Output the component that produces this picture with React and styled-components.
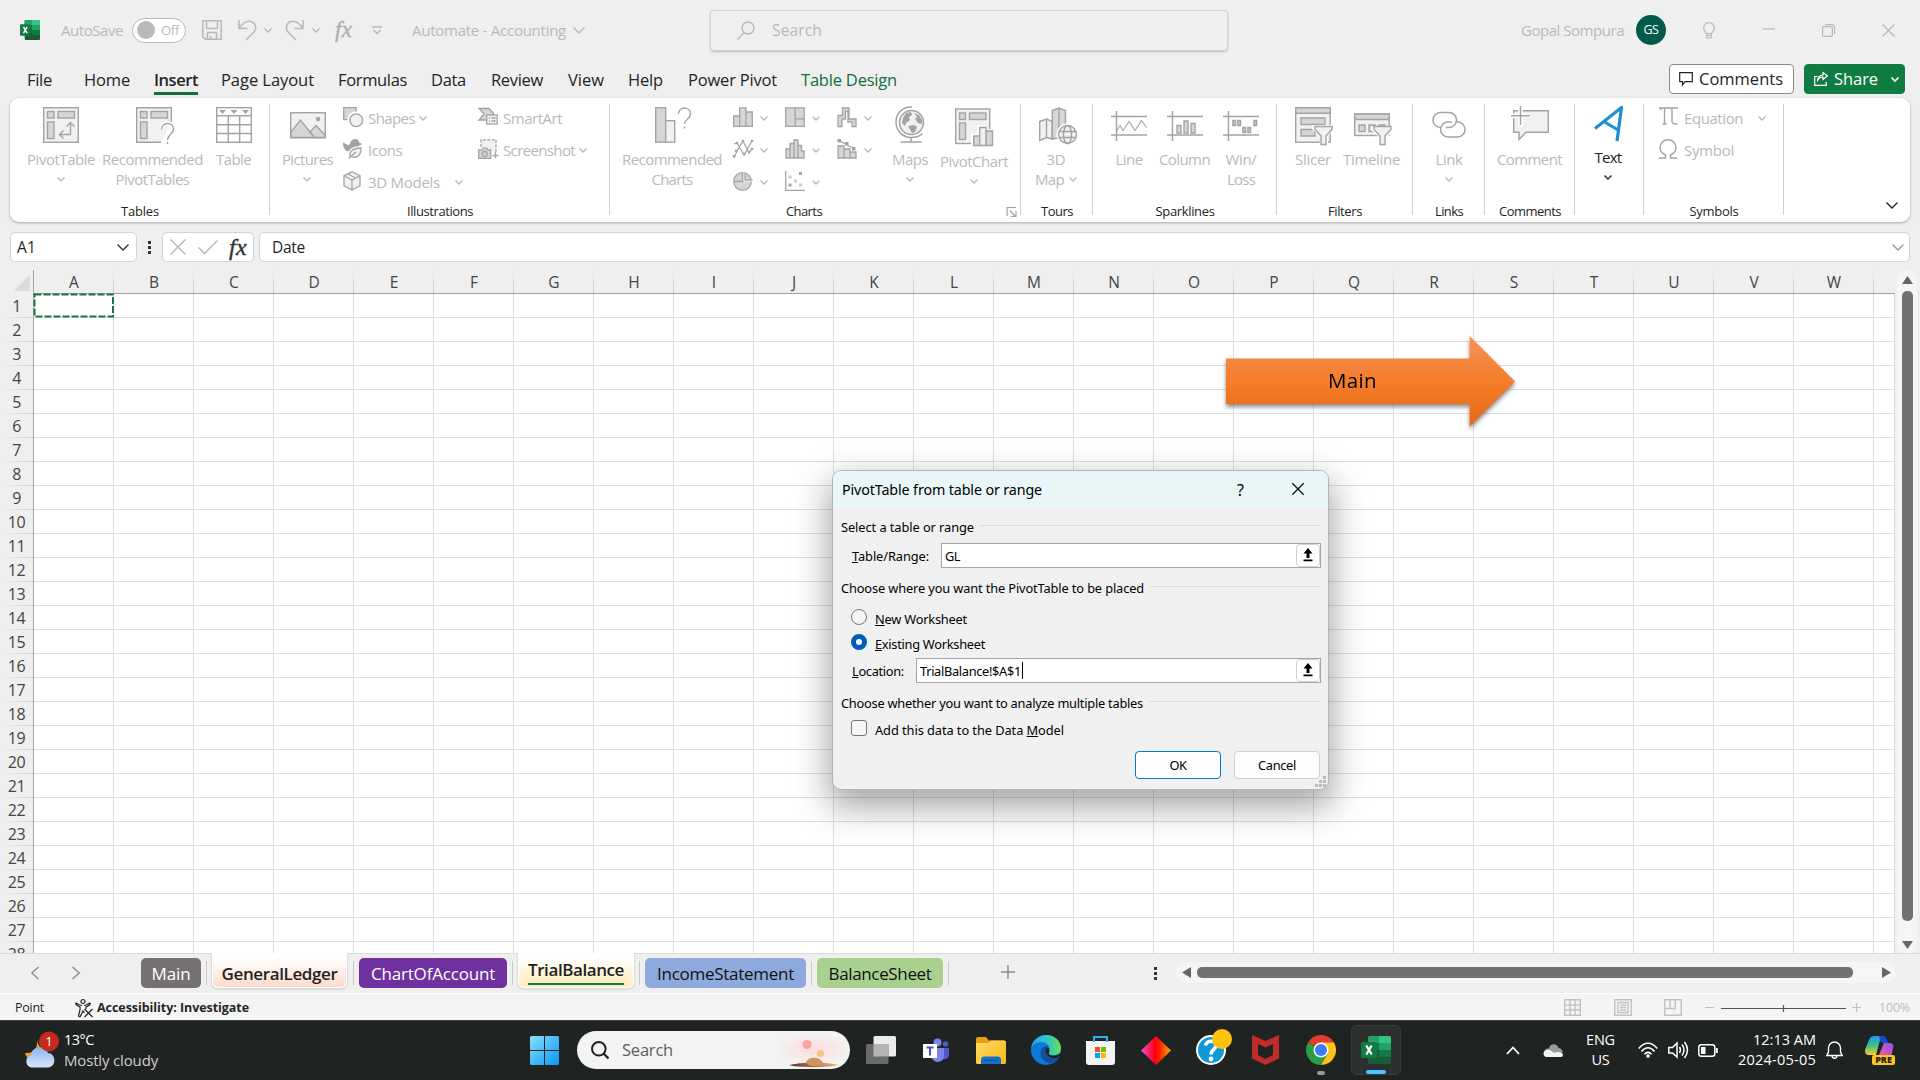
import React, { useLayoutEffect, useRef, useState } from "react";
import styled, { createGlobalStyle, css } from "styled-components";

const GlobalStyle = createGlobalStyle`
  * { box-sizing: border-box; }
  html, body { margin: 0; padding: 0; overflow: hidden; }
  body { font-family: "Open Sans", "Noto Sans", sans-serif; background: #efefef; color: #242424; }
`;

/* ---------- shared ---------- */

const px = (v) => `${v || 0}px`;
const offset = css`
  margin-left: ${(p) => px(p.$ml)};
`;

const LabelBox = styled.span`
  ${offset}
  display: block;
  flex: none;
  width: ${(p) => px(p.$w)};
  font-size: ${(p) => p.$size || 15}px;
  line-height: 20px;
  font-weight: ${(p) => p.$weight || 400};
  color: ${(p) => p.$color || "inherit"};
  white-space: nowrap;
  text-align: left;
`;

/* A one-line label that tracks its letters so that it fills the given width. */
function Label({ w, ml, size, weight, color, children }) {
  const ref = useRef(null);
  const [spacing, setSpacing] = useState(0);
  useLayoutEffect(() => {
    const range = document.createRange();
    range.selectNodeContents(ref.current);
    const natural = range.getBoundingClientRect().width;
    setSpacing((w - natural) / ref.current.textContent.length);
  }, [w]);
  return (
    <LabelBox ref={ref} $w={w} $ml={ml} $size={size} $weight={weight} $color={color} style={{ letterSpacing: spacing }}>
      {children}
    </LabelBox>
  );
}

const Svg = styled.svg`
  ${offset}
  display: block;
  flex: none;
  overflow: visible;
  fill: none;
`;
const Icon = ({ w, h, ml, vb, children, ...rest }) => (
  <Svg width={w} height={h} viewBox={vb || `0 0 ${w} ${h}`} $ml={ml} {...rest}>
    {children}
  </Svg>
);

const LINE = "#a3a3a3";
const MID = "#d6d6d6";
const PALE = "#f1f1f1";
const OFF = "#b9b9b9";

const Chevron = ({ w = 8, ml, color = OFF, sw = 1.4 }) => (
  <Icon w={w} h={w / 2 + 1} ml={ml} stroke={color} strokeWidth={sw}>
    <path d={`M.5 .5 L${w / 2} ${w / 2} L${w - 0.5} .5`} />
  </Icon>
);

const ExcelLogo = ({ w, h }) => (
  <Icon w={w} h={h} vb="0 0 30 28" preserveAspectRatio="none">
    <rect x="7" y="0" width="23" height="28" rx="1.5" fill="#185c37" />
    <path d="M7 1.5Q7 0 8.5 0H18v7H7z" fill="#21a366" />
    <path d="M18 0h10.500q1.500 0 1.500 1.500V7H18z" fill="#33c481" />
    <path d="M7 7h11v7H7z" fill="#107c41" />
    <path d="M18 7h12v7H18z" fill="#21a366" />
    <path d="M18 14h12v7H18z" fill="#107c41" />
    <rect x="0" y="6" width="16" height="16" rx="1.500" fill="#107c41" />
    <path d="M5.300 9.500L10.700 18.500M10.700 9.500L5.300 18.500" stroke="#fff" strokeWidth="2.200" />
  </Icon>
);

/* ---------- title bar ---------- */

const Screen = styled.div`
  width: 1920px;
  height: 1080px;
  display: flex;
  flex-direction: column;
  overflow: hidden;
`;
const TitleBar = styled.header`
  height: 50px;
  padding: 10px 0 0 20px;
  display: flex;
  align-items: center;
  color: ${OFF};
`;
const Toggle = styled.div`
  ${offset}
  width: 54px;
  height: 25px;
  border: 1px solid #b9b9b9;
  border-radius: 13px;
  background: #fff;
  display: flex;
  align-items: center;
  padding-left: 4px;
`;
const Knob = styled.span`
  width: 18px;
  height: 18px;
  border-radius: 50%;
  background: #b9b9b9;
`;
const Fx = styled.span`
  ${offset}
  width: ${(p) => p.$w || 18}px;
  font: italic ${(p) => p.$size || 22}px/24px "Liberation Serif", serif;
  color: ${(p) => p.$color || "#b0b0b0"};
  -webkit-text-stroke: 0.4px;
  letter-spacing: 0.3px;
`;
const SearchBox = styled.div`
  ${offset}
  width: 518px;
  height: 41px;
  border: 1px solid #d2d2d2;
  border-radius: 4px;
  box-shadow: 0 1px 2px rgba(0, 0, 0, 0.22);
  display: flex;
  align-items: center;
  padding-left: 26px;
`;
const Avatar = styled.div`
  ${offset}
  width: 30px;
  height: 30px;
  border-radius: 50%;
  background: #005b4c;
  color: #fff;
  display: flex;
  align-items: center;
  justify-content: center;
`;

const TopBar = () => (
  <TitleBar>
    <ExcelLogo w={20} h={20} />
    <Label ml={21} w={62} size={15}>AutoSave</Label>
    <Toggle $ml={9}>
      <Knob />
      <Label ml={6} w={18} size={13}>Off</Label>
    </Toggle>
    <Icon w={20} h={20} ml={16} stroke={OFF} strokeWidth="1.500">
      <path d="M.8.8h18.400v18.400H3.500L.8 17zM4.500 1v7.500h11V1M5.500 19v-6.500h9V19M8.500 19v-3" />
    </Icon>
    <Icon w={19} h={22} ml={16} stroke={OFF} strokeWidth="1.500">
      <path d="M1 1v8.500h8.500M1.500 9C5 3.500 9 1.500 13 2.500c5 1.500 6 7 3 10.500L8 21" />
    </Icon>
    <Chevron ml={7} />
    <Icon w={19} h={22} ml={13} stroke={OFF} strokeWidth="1.500">
      <path d="M18 1v8.500H9.500M17.500 9C14 3.500 10 1.500 6 2.500c-5 1.500-6 7-3 10.500L11 21" />
    </Icon>
    <Chevron ml={8} />
    <Fx $ml={15} $w={18} $size={23}>fx</Fx>
    <Icon w={10} h={9} ml={19} stroke={OFF} strokeWidth="1.400">
      <path d="M0 1h10M1.500 4L5 7.500 8.500 4" />
    </Icon>
    <Label ml={30} w={154} size={15}>Automate - Accounting</Label>
    <Chevron ml={7} w={12} />
    <SearchBox $ml={125}>
      <Icon w={18} h={19} stroke={OFF} strokeWidth="1.300">
        <circle cx="11" cy="7" r="6" />
        <path d="M7 11.500L.500 18.500" />
      </Icon>
      <Label ml={17} w={50} size={15.500}>Search</Label>
    </SearchBox>
    <Label ml={293} w={103} size={15}>Gopal Sompura</Label>
    <Avatar $ml={12}>
      <Label w={15} size={12.500}>GS</Label>
    </Avatar>
    <Icon w={12} h={17} ml={37} stroke={OFF} strokeWidth="1.200">
      <path d="M3.500 11.500C1 9 .6 7.500.6 6a5.400 5.400 0 0 1 10.800 0c0 1.500-.4 3-2.900 5.500zM3.800 11.500v4.500h4.400v-4.500M4 13.500h4" />
    </Icon>
    <Icon w={12} h={2} ml={48} stroke={OFF} strokeWidth="1.200">
      <path d="M0 0h12" />
    </Icon>
    <Icon w={13} h={13} ml={47} stroke={OFF} strokeWidth="1.200">
      <rect x=".6" y="2.600" width="9.800" height="9.800" rx="1.500" />
      <path d="M3 .6h6.500a3 3 0 0 1 3 3V10" />
    </Icon>
    <Icon w={13} h={13} ml={47} stroke={OFF} strokeWidth="1.200">
      <path d="M.5.5l12 12M12.500.5l-12 12" />
    </Icon>
  </TitleBar>
);

/* ---------- ribbon tabs ---------- */

const TabRow = styled.nav`
  height: 48px;
  padding-left: 27px;
  display: flex;
  align-items: flex-start;
`;
const Tab = styled.div`
  ${offset}
  height: 45px;
  padding-top: 20px;
  border-bottom: 3px solid ${(p) => (p.$active ? "#0f703b" : "transparent")};
`;
const HeadButton = styled.button`
  ${offset}
  margin-top: 14px;
  height: 30px;
  width: ${(p) => px(p.$w)};
  padding: 0 0 0 9px;
  display: flex;
  align-items: center;
  font-family: inherit;
  border-radius: 4px;
  border: 1px solid ${(p) => (p.$green ? "#107c41" : "#8a8a8a")};
  background: ${(p) => (p.$green ? "#107c41" : "#fff")};
  color: ${(p) => (p.$green ? "#fff" : "#242424")};
`;

const tabs = [
  ["File", 25, 0], ["Home", 46, 32], ["Insert", 44, 24], ["Page Layout", 93, 23], ["Formulas", 69, 24],
  ["Data", 35, 24], ["Review", 52, 25], ["View", 36, 25], ["Help", 35, 24], ["Power Pivot", 89, 25], ["Table Design", 96, 24],
];

const Tabs = () => (
  <TabRow>
    {tabs.map(([name, w, ml]) => (
      <Tab key={name} $ml={ml} $active={name === "Insert"}>
        <Label w={w} size={16.500} weight={name === "Insert" ? 600 : 400} color={name === "Table Design" ? "#0f703b" : "#242424"}>{name}</Label>
      </Tab>
    ))}
    <HeadButton $ml={772} $w={125}>
      <Icon w={14} h={14} stroke="#242424" strokeWidth="1.200">
        <path d="M.7.7h12.600v9H6L3.500 13V9.700H.7z" />
      </Icon>
      <Label ml={6} w={84} size={16.500}>Comments</Label>
    </HeadButton>
    <HeadButton $ml={10} $w={101} $green>
      <Icon w={14} h={14} stroke="#fff" strokeWidth="1.200">
        <path d="M3.500 4.500H.7v8.800h11.500V10M3.500 9.500C4 6.500 6 5 9 5v2.500L13.400 3.800 9 .6V3C5.500 3.200 3.500 5.500 3.500 9.500z" />
      </Icon>
      <Label ml={6} w={44} size={16.500}>Share</Label>
      <Chevron ml={13} color="#fff" sw={1.600} />
    </HeadButton>
  </TabRow>
);

/* ---------- ribbon ---------- */

const RibbonPanel = styled.section`
  width: 1900px;
  height: 124px;
  margin-left: 10px;
  flex: none;
  display: flex;
  background: #fff;
  border-radius: 9px;
  box-shadow: 0 1px 3px rgba(0, 0, 0, 0.3);
  position: relative;
`;
const Group = styled.div`
  flex: none;
  width: ${(p) => px(p.$w)};
  height: 124px;
  display: flex;
  flex-direction: column;
  background: linear-gradient(#cfcfcf, #cfcfcf) right 6px / 1px 111px no-repeat;
`;
const GroupBody = styled.div`
  height: 103px;
  display: flex;
  align-items: flex-start;
`;
const GroupFoot = styled.div`
  height: 20px;
  display: flex;
  align-items: center;
`;
const GroupName = styled.div`
  flex: 1;
  display: flex;
  justify-content: center;
`;
const Large = styled.div`
  ${offset}
  flex: none;
  width: ${(p) => px(p.$w)};
  padding-top: ${(p) => 8 - (p.$up || 0)}px;
  display: flex;
  flex-direction: column;
  align-items: center;
  color: ${(p) => (p.$dark ? "#242424" : OFF)};
`;
const LargeIcon = styled.div`
  height: 43px;
  display: flex;
  justify-content: center;
`;
const SecondLine = styled.div`
  height: 20px;
  display: flex;
  align-items: center;
  justify-content: center;
`;
const Column = styled.div`
  ${offset}
  flex: none;
  width: ${(p) => px(p.$w)};
  padding-top: 4px;
  color: ${OFF};
`;
const SmallRow = styled.div`
  height: 32px;
  display: flex;
  align-items: center;
`;
const IconSlot = styled.div`
  width: 20px;
  height: 20px;
  flex: none;
  margin-top: -2px;
`;
const ChartGrid = styled.div`
  ${offset}
  flex: none;
  padding-top: 4px;
  display: grid;
  grid-template-columns: repeat(3, 52px);
  grid-auto-rows: 32px;
  align-items: center;
`;
const ChartCell = styled.div`
  display: flex;
  align-items: center;
`;
const Collapse = styled.div`
  margin-left: 102px;
  padding-top: 104px;
`;

const LargeButton = ({ w, ml, icon, text, tw, second, sw, chevron, dark, up }) => (
  <Large $w={w} $ml={ml} $dark={dark} $up={up}>
    <LargeIcon>{icon}</LargeIcon>
    <Label w={tw || w} size={15}>{text}</Label>
    <SecondLine>
      {second && <Label w={sw} size={15}>{second}</Label>}
      {chevron && <Chevron ml={second ? 5 : -1} color={dark ? "#242424" : OFF} />}
    </SecondLine>
  </Large>
);

const Small = ({ icon, text, w, chevron, gap = 5 }) => (
  <SmallRow>
    <IconSlot>{icon}</IconSlot>
    <Label ml={5} w={w} size={15}>{text}</Label>
    {chevron && <Chevron ml={gap} />}
  </SmallRow>
);

const RibbonGroup = ({ w, name, nameW, launcher, children }) => (
  <Group $w={w}>
    <GroupBody>{children}</GroupBody>
    <GroupFoot>
      <GroupName>{name && <Label w={nameW} size={13} color="#242424">{name}</Label>}</GroupName>
      {launcher && (
        <Svg width="11" height="11" $ml={8} stroke={LINE} strokeWidth="1.200" viewBox="-0.500 -5 11 11">
          <path d="M.6 5V-3.500H9.500M3.500-.5L8.500 5M9.500 0v5.500H4" />
        </Svg>
      )}
      {launcher && <Spacer />}
    </GroupFoot>
  </Group>
);
const Spacer = styled.span`
  width: 4px;
`;

const Funnel = ({ x, y }) => (
  <path transform={`translate(${x} ${y})`} d="M0 0h17v3l-6 6.500V18H6V9.500L0 3z" fill={PALE} stroke={LINE} strokeWidth="1.400" />
);

const PivotIcon = () => (
  <Icon w={36} h={38} stroke={LINE} strokeWidth="1.400">
    <rect x=".7" y="1.700" width="34.600" height="34.600" fill={PALE} />
    <rect x="4.500" y="5.500" width="6.500" height="6.500" fill={MID} />
    <rect x="15" y="5.500" width="16.500" height="6.500" fill={MID} />
    <rect x="4.500" y="16" width="6.500" height="16.500" fill={MID} />
    <path d="M17 28.500h10.500V17M20.500 24.500l-4 4 4 4M23.500 20.500l4-4 4 4" />
  </Icon>
);
const RecPivotIcon = () => (
  <Icon w={34} h={38} stroke={LINE} strokeWidth="1.400">
    <path d="M25 36.300H.7V1.700h34.600V16" fill={PALE} />
    <rect x="4.500" y="5.500" width="6.500" height="6.500" fill={MID} />
    <rect x="15" y="5.500" width="16.500" height="6.500" fill={MID} />
    <rect x="4.500" y="16" width="6.500" height="16.500" fill={MID} />
    <path d="M25.500 23.500c0-8 12-8 12-.5 0 5-6 5.500-6 11" stroke="#fff" strokeWidth="5" />
    <path d="M25.500 23.500c0-8 12-8 12-.5 0 5-6 5.500-6 11M31.500 36v2" />
  </Icon>
);
const TableIcon = () => (
  <Icon w={36} h={38} stroke={LINE} strokeWidth="1.400">
    <rect x=".7" y="1.700" width="34.600" height="34.600" fill="#fff" />
    <path d="M1 9.700h34M1 18.700h34M1 27.500h34M12.300 10v26M23.700 10v26" />
    <path d="M3 4h7l-3.500 4zM14.500 4h7L18 8zM26 4h7l-3.500 4z" fill={LINE} stroke="none" />
  </Icon>
);
const PictureIcon = () => (
  <Icon w={36} h={38} stroke={LINE} strokeWidth="1.400">
    <rect x=".7" y="6.700" width="34.600" height="25" fill={PALE} />
    <path d="M1 26l9.500-12 14 17.500H1z" fill={MID} />
    <path d="M20 26l6-6.500 9 9.500v2.500H24.500z" fill={MID} />
    <circle cx="28" cy="13" r="2.200" fill={LINE} stroke="none" />
  </Icon>
);
const ShapesIcon = () => (
  <Icon w={20} h={20} stroke={LINE} strokeWidth="1.300">
    <path d="M.7.7h12.500v12H.7z" fill={MID} />
    <circle cx="12.800" cy="13" r="8.500" fill="#fff" stroke="none" />
    <circle cx="13.200" cy="13.200" r="6.400" fill={PALE} />
  </Icon>
);
const BirdIcon = () => (
  <Icon w={20} h={20} stroke={LINE} strokeWidth="1.300">
    <path d="M.7 4.500l5 2.500C8 6.500 7.500.7 12 .7c3 0 3.500 2 3.500 3.300l2.500 1-2.500 1.200c0 3-2 4.800-5 5.300H4C1.500 10 .7 7 .7 4.500z" fill={LINE} />
    <path d="M6 19c0-7 4-10 12-10 0 7-2 10-6 10-2.500 0-4-1-4-3" fill="#fff" stroke="#fff" strokeWidth="4" />
    <path d="M5.500 19.500L13 13M7 17.500c-1-6 4-8.500 11-8.500 0 7-3 11-11 8.500z" fill={PALE} />
  </Icon>
);
const CubeIcon = () => (
  <Icon w={18} h={20} stroke={LINE} strokeWidth="1.300">
    <path d="M9 .8l8 3.900v9.900L9 19l-8-4.400V4.700z" fill={PALE} />
    <path d="M1.500 5L9 9l7.500-4M9 9v9.500M5 3l7.500 4" />
  </Icon>
);
const SmartArtIcon = () => (
  <Icon w={20} h={18} stroke={LINE} strokeWidth="1.300">
    <path d="M1 1.500h10l5 5.500-2.500 2H9v4H1l5-6z" fill={MID} />
    <rect x="8.700" y="8" width="10.500" height="9" fill={PALE} />
    <path d="M11 11h1M13.500 11h4M11 14h1M13.500 14h4" />
  </Icon>
);
const ScreenshotIcon = () => (
  <Icon w={20} h={20} stroke={LINE} strokeWidth="1.300">
    <path d="M3 8V.8h15V14" strokeDasharray="3 1.500" fill={PALE} />
    <path d="M17.500 13v6M14.500 16.500h6" />
    <path d="M.7 11h3l1-1.800h4l1 1.800h3v8.300H.7z" fill={MID} />
    <circle cx="6.700" cy="15" r="2.500" />
  </Icon>
);
const RecChartIcon = () => (
  <Icon w={34} h={38} stroke={LINE} strokeWidth="1.400">
    <rect x=".7" y="1.700" width="10" height="34.500" fill={MID} />
    <rect x="10.700" y="14.700" width="9" height="21.500" fill={PALE} />
    <path d="M23.500 8c0-8 12-8 12 0 0 5-6 5.500-6 10M29.500 20.500v2" />
  </Icon>
);
const GlobeIcon = () => (
  <Icon w={30} h={38} stroke={LINE} strokeWidth="1.500">
    <circle cx="16.500" cy="16.500" r="12" fill={PALE} />
    <path d="M17 1C7 .5 1 8 1 16c0 9 7 15.500 15 15.500 5 0 9-1.500 11.500-4M16 31.500v4M5.500 36h21" />
    <path d="M8 12l3-5 5-1 1 3-3 2 1 3-4 3-1 3-3-3zM19 7l5 2 3 5v4l-4-1-3-4 2-2zM13 20l6-1 3 2-2 5-3 1z" fill={LINE} stroke="none" />
  </Icon>
);
const PivotChartIcon = () => (
  <Icon w={38} h={38} stroke={LINE} strokeWidth="1.400">
    <rect x=".7" y="1" width="34" height="34.500" fill={PALE} />
    <rect x="4.500" y="5" width="6" height="6.500" fill={MID} />
    <rect x="14.500" y="5" width="16.500" height="6.500" fill={MID} />
    <rect x="4.500" y="15" width="6" height="16.500" fill={MID} />
    <path d="M16 39V26h6v-9h9v4h8v18z" fill="#fff" stroke="none" />
    <path d="M18.700 28h6v9.500h-6zM31 23h6.500v14.500H31z" fill={MID} />
    <path d="M24.700 19.500h6.300v18h-6.300z" fill={PALE} />
  </Icon>
);
const Map3DIcon = () => (
  <Icon w={34} h={38} stroke={LINE} strokeWidth="1.400">
    <path d="M.7 15.500l7-2.500 5.500 2.500V33l-5.500-1.500-7 3z" fill={PALE} />
    <path d="M13.300 4.500L20 2l6.500 2.500V34L20 32l-6.700 1z" fill={MID} />
    <path d="M7.500 13v18.500M20 2v30" />
    <circle cx="28.500" cy="28.500" r="11" fill="#fff" stroke="none" />
    <circle cx="28.500" cy="28.500" r="9" fill={PALE} />
    <ellipse cx="28.500" cy="28.500" rx="4" ry="9" />
    <path d="M20 25.500h17M20 31.500h17" />
  </Icon>
);
const Spark = ({ children }) => (
  <Icon w={36} h={38} stroke={LINE} strokeWidth="1.400">
    <path d="M0 10.500h36M0 29h36M5.500 5v30" />
    {children}
  </Icon>
);
const SparkLine = () => (
  <Spark><path d="M6 24.500l3-5 3 5 6-9 6 9 6.500-10 5 7" strokeWidth="1.100" /></Spark>
);
const SparkColumn = () => (
  <Spark><path d="M10 19.500h4V27h-4zM17 15h4v12h-4zM24 17.500h4V27h-4z" fill={MID} /></Spark>
);
const SparkWin = () => (
  <Spark><path d="M10 14.500h2.500v5H10zM15 14.500h2.500v5H15zM20 21.500h2.500v5H20zM25 21.500h2.500v5H25zM31 14.500h2.500v5H31z" fill={MID} strokeWidth="1.600" /></Spark>
);
const SlicerIcon = () => (
  <Icon w={36} h={38} stroke={LINE} strokeWidth="1.400">
    <rect x=".7" y="1.700" width="34.500" height="34.500" fill={PALE} />
    <path d="M.7 1.700h34.500v5.500H.7z" fill={MID} />
    <path d="M6 12h24v6.500H6zM6 23.500h14v6.500H6z" fill={MID} />
    <path d="M17 19h22v5l-6 6v10h-8V30l-8-7z" fill="#fff" stroke="none" />
    <Funnel x={20} y={20.500} />
  </Icon>
);
const TimelineIcon = () => (
  <Icon w={36} h={38} stroke={LINE} strokeWidth="1.400">
    <rect x=".7" y="8" width="34.500" height="21.500" fill={PALE} />
    <path d="M.7 8h34.500v5.500H.7z" fill={MID} />
    <path d="M5 19h6v6.500H5zM15 19h6v6.500h-6zM25 19h6v6.500h-6z" fill={MID} />
    <path d="M17 20.500h22v5l-6 6v10h-8V31l-8-7z" fill="#fff" stroke="none" />
    <Funnel x={20} y={20.500} />
  </Icon>
);
const LinkIcon = () => (
  <Icon w={36} h={38} stroke={LINE} strokeWidth="1.500">
    <path d="M10 21.500H9.500a7.500 7.500 0 0 1 0-15h8.500a7.500 7.500 0 0 1 0 15h-3M26 16h.5a7.500 7.500 0 0 1 0 15H17a7.500 7.500 0 0 1 0-15h4" />
  </Icon>
);
const CommentIcon = () => (
  <Icon w={38} h={38} stroke={LINE} strokeWidth="1.400">
    <path d="M2.700 4.700h34.600v21.500H15L8 33.500v-7.300H2.700z" fill={PALE} />
    <path d="M9.500-1v22M0 9.700h19" stroke="#fff" strokeWidth="4.500" />
    <path d="M9.500 0v19M0 9.700h19" />
  </Icon>
);
const TextIcon = () => (
  <Icon w={28} h={40} stroke="#1e8fd5" strokeWidth="3.200" strokeLinejoin="round">
    <path d="M1 24.500L27.500 3.500 23 37M9 17l15 9" />
  </Icon>
);
const PiIcon = () => (
  <Icon w={19} h={18} stroke={LINE} strokeWidth="1.400">
    <path d="M0 1h19M2 0v3M5.500 1v16M3.500 17h4M13 1v13q0 3 3.500 3h2" />
  </Icon>
);
const OmegaIcon = () => (
  <Icon w={18} h={20} stroke={LINE} strokeWidth="1.400">
    <path d="M0 19h6.500v-3C3 14.500 1 11.500 1 8.500a8 7.800 0 0 1 16 0c0 3-2 6-5.500 7.500v3H18" />
  </Icon>
);

const chartIcons = [
  <path key="bar" d="M.7 9h6v10.300h-6zM6.700.8H13v18.500H6.700zM13 5h6.300v14.300H13z" fill={MID} />,
  <path key="tree" d="M.7.8h9.500v18.500H.7zM10.200.8h9v11h-9zM10.200 11.800h9v7.500h-9z" fill={MID} />,
  <path key="fall" d="M1 19.500V8.500h4.500V1H12v11h7v7.500h-4V15h-4V4.500H8.500V12H5v7.500z" fill={MID} />,
  <g key="line">
    <path d="M1 19L4 12 10 2l6 12 3-4M1 5l3-1 7 12L19 2" strokeWidth="1.200" />
    <path d="M4 4h.1M10 2h.1M19 2h.1M1 17h.1M11 15h.1M16 13h.1M3 12h.1M19 10h.1" strokeLinecap="round" strokeWidth="2.600" />
  </g>,
  <path key="hist" d="M1 10h4V4.500h4V1h4v5.500h3.500v5.500H19v7H1zM5 10v9M9 5v14M13 7v12" fill={MID} />,
  <g key="combo">
    <path d="M1 7h6v12H1zM7 10h6v9H7zM13 13h6v6h-6z" fill={MID} />
    <path d="M2 1.500l7 4 8 4" />
    <path d="M.500 0h3.500v3.500H.500zM8 3h3.500v3.500H8zM15 8h3.500v3.500H15z" fill={LINE} stroke="none" />
  </g>,
  <g key="pie"><circle cx="9.500" cy="10.500" r="8.800" fill={MID} /><path d="M11.500-.5v10h8.500" stroke="#fff" strokeWidth="2" /><path d="M9.500 1.700v8.800h-8M12 1v8h7.500" /></g>,
  <g key="scatter">
    <path d="M.7 0v19.300H20" />
    <path d="M3.500 14h3M14 2.500h3" strokeWidth="3" />
    <path d="M3.500 6h3M9 10h3M14 14h3" stroke="#cccccc" strokeWidth="3" />
  </g>,
];

const Ribbon = () => (
  <RibbonPanel>
    <RibbonGroup w={260} name="Tables" nameW={38}>
      <LargeButton ml={17} w={68} icon={<PivotIcon />} text="PivotTable" chevron />
      <LargeButton ml={7} w={101} icon={<RecPivotIcon />} text="Recommended" second="PivotTables" sw={74} />
      <LargeButton ml={13} w={35} icon={<TableIcon />} text="Table" />
    </RibbonGroup>
    <RibbonGroup w={340} name="Illustrations" nameW={66}>
      <LargeButton ml={12} w={51} icon={<PictureIcon />} text="Pictures" chevron />
      <Column $ml={10} $w={135}>
        <Small icon={<ShapesIcon />} text="Shapes" w={47} chevron gap={4} />
        <Small icon={<BirdIcon />} text="Icons" w={34} />
        <Small icon={<CubeIcon />} text="3D Models" w={72} chevron gap={15} />
      </Column>
      <Column $w={120}>
        <Small icon={<SmartArtIcon />} text="SmartArt" w={59} />
        <Small icon={<ScreenshotIcon />} text="Screenshot" w={72} chevron gap={4} />
      </Column>
    </RibbonGroup>
    <RibbonGroup w={411} name="Charts" nameW={36} launcher>
      <LargeButton ml={12} w={100} icon={<RecChartIcon />} text="Recommended" second="Charts" sw={41} />
      <ChartGrid $ml={11}>
        {chartIcons.map((icon, i) => (
          <ChartCell key={i}>
            <IconSlot><Icon w={20} h={20} stroke={LINE} strokeWidth="1.300">{icon}</Icon></IconSlot>
            <Chevron ml={7} />
          </ChartCell>
        ))}
      </ChartGrid>
      <LargeButton ml={3} w={36} icon={<GlobeIcon />} text="Maps" chevron />
      <LargeButton ml={12} w={68} up={-2} icon={<PivotChartIcon />} text="PivotChart" chevron />
    </RibbonGroup>
    <RibbonGroup w={72} name="Tours" nameW={32}>
      <LargeButton ml={14} w={42} icon={<Map3DIcon />} text="3D" tw={19} second="Map" sw={29} chevron />
    </RibbonGroup>
    <RibbonGroup w={184} name="Sparklines" nameW={59}>
      <LargeButton ml={18} w={36} icon={<SparkLine />} text="Line" tw={27} />
      <LargeButton ml={12} w={51} icon={<SparkColumn />} text="Column" />
      <LargeButton ml={13} w={36} icon={<SparkWin />} text="Win/" tw={31} second="Loss" sw={28} />
    </RibbonGroup>
    <RibbonGroup w={136} name="Filters" nameW={34}>
      <LargeButton ml={18} w={36} icon={<SlicerIcon />} text="Slicer" />
      <LargeButton ml={12} w={57} icon={<TimelineIcon />} text="Timeline" />
    </RibbonGroup>
    <RibbonGroup w={72} name="Links" nameW={28}>
      <LargeButton ml={18} w={36} icon={<LinkIcon />} text="Link" tw={27} chevron />
    </RibbonGroup>
    <RibbonGroup w={90} name="Comments" nameW={62}>
      <LargeButton ml={12} w={65} icon={<CommentIcon />} text="Comment" />
    </RibbonGroup>
    <RibbonGroup w={69}>
      <LargeButton ml={15} w={36} up={2} icon={<TextIcon />} text="Text" tw={27} chevron dark />
    </RibbonGroup>
    <RibbonGroup w={140} name="Symbols" nameW={49}>
      <Column $ml={15} $w={110}>
        <Small icon={<PiIcon />} text="Equation" w={59} chevron gap={15} />
        <Small icon={<OmegaIcon />} text="Symbol" w={50} />
      </Column>
    </RibbonGroup>
    <Collapse>
      <Chevron w={12} color="#242424" />
    </Collapse>
  </RibbonPanel>
);

/* ---------- formula bar ---------- */

const FormulaRow = styled.div`
  height: 48px;
  flex: none;
  padding: 10px 0 0 10px;
  display: flex;
`;
const Field = styled.div`
  ${offset}
  width: ${(p) => px(p.$w)};
  height: 30px;
  padding: 0 ${(p) => p.$pr || 6}px 0 ${(p) => p.$pl || 6}px;
  border: 1px solid #d4d4d4;
  border-radius: 5px;
  background: #fff;
  display: flex;
  align-items: center;
  justify-content: space-between;
`;
const Dots = () => (
  <Icon w={4} h={30} ml={11}><path d="M0 9h3v3H0zM0 14h3v3H0zM0 19h3v3H0z" fill="#333" /></Icon>
);

const FormulaBar = () => (
  <FormulaRow>
    <Field $w={127} $pr={7}>
      <Label w={19} size={15.500}>A1</Label>
      <Chevron w={12} color="#333" />
    </Field>
    <Dots />
    <Field $ml={10} $w={92} $pl={7} $pr={5}>
      <Icon w={16} h={16} stroke="#b5b5b5" strokeWidth="1.400"><path d="M.5.5l15 15M15.500.5l-15 15" /></Icon>
      <Icon w={20} h={14} stroke="#b5b5b5" strokeWidth="1.400"><path d="M.5 7.500l6 6L19.500.5" /></Icon>
      <Fx $w={19} $size={24} $color="#333">fx</Fx>
    </Field>
    <Field $ml={5} $w={1651} $pl={12} $pr={5}>
      <Label w={33} size={15.500}>Date</Label>
      <Chevron w={12} color="#9a9a9a" />
    </Field>
  </FormulaRow>
);

/* ---------- worksheet ---------- */

const Sheet = styled.main`
  height: 683px;
  flex: none;
  display: flex;
  position: relative;
`;
const RowHeads = styled.div`
  width: 34px;
  border-right: 1px solid #a6a6a6;
  overflow: hidden;
`;
const Corner = styled.div`
  height: 24px;
  padding: 5px 0 0 14px;
  border-bottom: 1px solid #efefef;
  border-right: 1px solid #efefef;
  margin-right: -1px;
`;
const RowHead = styled.div`
  height: 24px;
  background: linear-gradient(to right, transparent, #d0d0d0) bottom / 100% 1px no-repeat;
  text-align: center;
  font-size: 16px;
  letter-spacing: -0.400px;
  line-height: 25px;
  color: #444;
`;
const CellsPane = styled.div`
  width: 1861px;
  display: flex;
  flex-direction: column;
`;
const ColHeads = styled.div`
  height: 24px;
  flex: none;
  border-bottom: 1px solid #a0a0a0;
  display: flex;
  overflow: hidden;
`;
const ColHead = styled.div`
  flex: none;
  width: 80px;
  height: 23px;
  background: linear-gradient(transparent, #c8c8c8) right / 1px 100% no-repeat;
  text-align: center;
  font-size: 15.500px;
  line-height: 24px;
  color: #444;
`;
const Cells = styled.div`
  flex: 1;
  border-right: 1px solid #dcdcdc;
  background:
    repeating-linear-gradient(to right, transparent 0 79px, #dedede 79px 80px),
    repeating-linear-gradient(to bottom, #fff 0 23px, #dedede 23px 24px);
`;
const Marching = styled.svg`
  position: absolute;
  left: 33px;
  top: 23px;
`;
const ArrowShape = styled.div`
  position: absolute;
  left: 1226px;
  top: 66px;
  width: 289px;
  height: 92px;
  filter: drop-shadow(0 3px 2px rgba(0, 0, 0, 0.450));
`;
const ArrowFill = styled.div`
  height: 92px;
  padding: 34px 0 0 102px;
  clip-path: polygon(0 24.500%, 84.300% 24.500%, 84.300% 0, 100% 49.500%, 84.300% 98.500%, 84.300% 74%, 0 74%);
  background: linear-gradient(#f6925a, #f57c2a 50%, #e66914);
  color: #000;
`;
const VScroll = styled.div`
  margin-left: 2px;
  width: 20px;
  height: 685px;
  border-radius: 10px;
  background: #f5f5f5;
  display: flex;
  flex-direction: column;
  align-items: center;
  padding-top: 6px;
`;
const VThumb = styled.div`
  width: 11px;
  height: 630px;
  margin: 7px 0 20px;
  border-radius: 5px;
  background: #717171;
`;

const columns = "ABCDEFGHIJKLMNOPQRSTUVW".split("");
const rows = Array.from({ length: 28 }, (_, i) => i + 1);

/* ---------- dialog ---------- */

const Dialog = styled.div`
  position: absolute;
  left: 832px;
  top: 200px;
  width: 497px;
  height: 320px;
  border: 1px solid #b4b4b4;
  border-radius: 9px;
  background: #f0f0f0;
  box-shadow: 0 14px 34px 4px rgba(0, 0, 0, 0.340);
  overflow: hidden;
  color: #000;
  font-family: "Noto Sans", sans-serif;
`;
const DialogTitle = styled.div`
  height: 37px;
  background: #e8f6f8;
  padding-left: 9px;
  display: flex;
  align-items: center;
`;
const DialogBody = styled.div`
  padding: 8px 7px 0 8px;
  position: relative;
`;
const Section = styled.div`
  height: 22px;
  margin-top: ${(p) => px(p.$mt)};
  display: flex;
  align-items: center;
  &::after {
    content: "";
    flex: 1;
    margin-left: 6px;
    height: 1px;
    margin-top: -3px;
    background: #dcdcdc;
  }
`;
const FormRow = styled.div`
  height: 25px;
  padding-left: 11px;
  margin-top: ${(p) => px(p.$mt)};
  display: flex;
  align-items: center;
`;
const Choice = styled.div`
  height: 25px;
  padding-left: 10px;
  margin-top: ${(p) => px(p.$mt)};
  display: flex;
  align-items: center;
`;
const TextInput = styled.div`
  ${offset}
  flex: 1;
  height: 25px;
  border: 1px solid #a5a5a9;
  background: #fff;
  padding-left: 3px;
  display: flex;
  align-items: center;
`;
const Caret = styled.span`
  width: 1px;
  height: 17px;
  margin-left: 1px;
  background: #000;
`;
const Picker = styled.span`
  width: 24px;
  height: 23px;
  margin-left: auto;
  border: 1px solid #d0d0d0;
  border-radius: 4px;
  display: flex;
  align-items: center;
  justify-content: center;
`;
const Radio = styled.span`
  width: 16px;
  height: 16px;
  margin-top: -3px;
  border-radius: 50%;
  border: ${(p) => (p.$on ? "5px solid #005fb8" : "1px solid #767676")};
  background: ${(p) => (p.$on ? "#fff" : "#f4f4f4")};
`;
const Check = styled.span`
  width: 16px;
  height: 16px;
  margin-top: -3px;
  border-radius: 3px;
  border: 1px solid #767676;
  background: #f5f5f5;
`;
const Buttons = styled.div`
  display: flex;
  justify-content: flex-end;
  gap: 13px;
  margin-top: 9px;
  padding-right: 1px;
`;
const Button = styled.button`
  width: 86px;
  height: 28px;
  padding: 0;
  border-radius: 4px;
  border: 1px solid ${(p) => (p.$primary ? "#0078d4" : "#d0d0d0")};
  background: #fdfdfd;
  display: flex;
  align-items: center;
  justify-content: center;
  font-family: inherit;
  color: #000;
`;
const Grip = styled.svg`
  position: absolute;
  right: 2px;
  bottom: 2px;
`;

const PickerButton = () => (
  <Picker>
    <Icon w={10} h={16}><path d="M5 0l4.500 5.500H6.500V10h-3V5.500H.5zM.5 11.500h9v1.800h-9z" fill="#000" /></Icon>
  </Picker>
);

const PivotDialog = () => (
  <Dialog>
    <DialogTitle>
      <Label w={200} size={14.300}>PivotTable from table or range</Label>
      <Label ml={195} w={8} size={16}>?</Label>
      <Icon w={12} h={14} ml={47} stroke="#111" strokeWidth="1.300"><path d="M.3.3l11.400 11.400M11.700.3L.3 11.700" /></Icon>
    </DialogTitle>
    <DialogBody>
      <Section><Label w={133} size={12.800}>Select a table or range</Label></Section>
      <FormRow $mt={5}>
        <Label w={77} size={12.800}><u>T</u>able/Range:</Label>
        <TextInput $ml={12}><Label w={15} size={12.800}>GL</Label><PickerButton /></TextInput>
      </FormRow>
      <Section $mt={9}><Label w={303} size={12.800}>Choose where you want the PivotTable to be placed</Label></Section>
      <Choice $mt={7}><Radio /><Label ml={8} w={92} size={12.800}><u>N</u>ew Worksheet</Label></Choice>
      <Choice><Radio $on /><Label ml={8} w={110} size={12.800}><u>E</u>xisting Worksheet</Label></Choice>
      <FormRow $mt={2}>
        <Label w={52} size={12.800}><u>L</u>ocation:</Label>
        <TextInput $ml={12}><Label w={101} size={12.800}>TrialBalance!$A$1</Label><Caret /><PickerButton /></TextInput>
      </FormRow>
      <Section $mt={9}><Label w={302} size={12.800}>Choose whether you want to analyze multiple tables</Label></Section>
      <Choice $mt={3}><Check /><Label ml={8} w={189} size={12.800}>Add this data to the Data <u>M</u>odel</Label></Choice>
      <Buttons>
        <Button $primary><Label w={17} size={12.800}>OK</Label></Button>
        <Button><Label w={38} size={12.800}>Cancel</Label></Button>
      </Buttons>
    </DialogBody>
    <Grip width="11" height="11" fill="#bdbdbd">
      <path d="M8 0h3v3H8zM4 4h3v3H4zM8 4h3v3H8zM0 8h3v3H0zM4 8h3v3H4zM8 8h3v3H8z" />
    </Grip>
  </Dialog>
);

const Worksheet = () => (
  <Sheet>
    <RowHeads>
      <Corner><Icon w={16} h={16}><path d="M16 0v16H0z" fill="#dadada" /></Icon></Corner>
      {rows.map((r) => <RowHead key={r}>{r}</RowHead>)}
    </RowHeads>
    <CellsPane>
      <ColHeads>{columns.map((c) => <ColHead key={c}>{c}</ColHead>)}</ColHeads>
      <Cells />
    </CellsPane>
    <VScroll>
      <Icon w={11} h={8}><path d="M5.500 0L11 8H0z" fill="#666" /></Icon>
      <VThumb />
      <Icon w={11} h={8}><path d="M5.500 8L11 0H0z" fill="#666" /></Icon>
    </VScroll>
    <Marching width="82" height="26">
      <rect x="1.500" y="1.500" width="78.500" height="22" fill="none" stroke="#217346" strokeWidth="2" strokeDasharray="7 2" />
    </Marching>
    <ArrowShape>
      <ArrowFill><Label w={49} size={20.500}>Main</Label></ArrowFill>
    </ArrowShape>
    <PivotDialog />
  </Sheet>
);

/* ---------- sheet tabs and status bar ---------- */

const SheetBar = styled.div`
  height: 40px;
  flex: none;
  display: flex;
  align-items: flex-start;
  border-top: 1px solid #dadada;
  background: #efefef;
  padding-left: 31px;
  position: relative;
`;
const SheetTab = styled.div`
  ${offset}
  flex: none;
  width: ${(p) => px(p.$w)};
  height: ${(p) => (p.$tall ? 35 : 30)}px;
  margin-top: ${(p) => (p.$tall ? -1 : 4)}px;
  padding-top: ${(p) => (p.$tall ? (p.$active ? 0 : 7) : 2)}px;
  border-radius: ${(p) => (p.$tall ? "0 0 6px 6px" : "5px")};
  border: solid #fff;
  border-width: ${(p) => (p.$tall ? "0 1px 1px" : 0)};
  box-shadow: ${(p) => (p.$tall ? "0 1px 1px 1px #dcdcdc" : "none")};
  clip-path: ${(p) => (p.$tall ? "inset(0 -3px -3px -3px)" : "none")};
  background: ${(p) => p.$bg};
  color: ${(p) => p.$fg};
  display: flex;
  justify-content: center;
  line-height: 28px;
  span { line-height: 28px; }
`;
const Underlined = styled.div`
  height: 32px;
  padding-top: 3px;
  border-bottom: 2px solid #107c41;
`;
const Divider = styled.i`
  ${offset}
  width: 1px;
  height: 24px;
  margin-top: 7px;
  background: #c9c9c9;
`;
const BarIcon = styled.div`
  ${offset}
  flex: none;
  padding-top: 12px;
`;
const HScroll = styled.div`
  ${offset}
  margin-top: 8px;
  width: 720px;
  height: 21px;
  border-radius: 11px;
  background: #f5f5f5;
  display: flex;
  align-items: center;
  padding-left: 6px;
`;
const HThumb = styled.div`
  width: 656px;
  height: 11px;
  margin: 0 29px 0 6px;
  border-radius: 5px;
  background: #717171;
`;
const StatusBar = styled.footer`
  height: 27px;
  flex: none;
  border-top: 1px solid #fff;
  background: #f4f4f4;
  padding: 1px 0 0 15px;
  display: flex;
  align-items: center;
`;

const sheets = [
  { name: "Main", w: 60, tw: 39, ml: 61, after: 5, bg: "#767171", fg: "#fff" },
  { name: "GeneralLedger", w: 135, tw: 116, ml: 5, after: 6, tall: true, bg: "linear-gradient(#fff 15%, #fbdccb)", fg: "#1f1f1f", weight: 600 },
  { name: "ChartOfAccount", w: 148, tw: 124, ml: 5, after: 5, bg: "#7030a0", fg: "#fff" },
  { name: "TrialBalance", w: 116, tw: 96, ml: 5, after: 5, tall: true, active: true, bg: "linear-gradient(#fff 15%, #ffeab5)", fg: "#1f1f1f", weight: 600 },
  { name: "IncomeStatement", w: 161, tw: 137, ml: 5, after: 5, bg: "#8ea9db", fg: "#111" },
  { name: "BalanceSheet", w: 126, tw: 103, ml: 5, after: 5, bg: "#a9d08e", fg: "#111" },
];

const SheetTabs = () => (
  <SheetBar>
    <BarIcon><Icon w={8} h={14} stroke="#8a8a8a" strokeWidth="1.300"><path d="M7.500 1L.8 7 7.500 13" /></Icon></BarIcon>
    <BarIcon $ml={33}><Icon w={8} h={14} stroke="#8a8a8a" strokeWidth="1.300"><path d="M.5 1l6.700 6L.5 13" /></Icon></BarIcon>
    {sheets.map((s) => (
      <React.Fragment key={s.name}>
        <SheetTab $ml={s.ml} $w={s.w} $tall={s.tall} $active={s.active} $bg={s.bg} $fg={s.fg}>
          {s.active ? (
            <Underlined><Label w={s.tw} size={17} weight={s.weight}>{s.name}</Label></Underlined>
          ) : (
            <Label w={s.tw} size={17} weight={s.weight}>{s.name}</Label>
          )}
        </SheetTab>
        <Divider $ml={s.after} />
      </React.Fragment>
    ))}
    <Icon w={14} h={39} ml={52} stroke="#8a8a8a" strokeWidth="1.400"><path d="M7 11v14M0 18h14" /></Icon>
    <Icon w={3} h={39} ml={139}><path d="M0 13h3v3H0zM0 18h3v3H0zM0 23h3v3H0z" fill="#333" /></Icon>
    <HScroll $ml={19}>
      <Icon w={9} h={11}><path d="M0 5.500L9 0v11z" fill="#666" /></Icon>
      <HThumb />
      <Icon w={9} h={11}><path d="M9 5.500L0 0v11z" fill="#666" /></Icon>
    </HScroll>
  </SheetBar>
);

const Status = () => (
  <StatusBar>
    <Label w={29} size={12.500}>Point</Label>
    <Icon w={18} h={18} ml={31} stroke="#222" strokeWidth="1.200">
      <circle cx="8" cy="2.500" r="2" />
      <path d="M7 6.500C3 6 1 3 .7 4.500c0 1.500 2 2.500 4.300 3.500.8 2-1 6-1.500 9 1 1.500 2 .5 2.500-1l2-4 1.500 2M9 6.500c4-.5 6-3.500 6.300-2 0 1.500-2 2.500-4.300 3.500v2M9.500 10l8 8M17.500 10l-8 8" />
    </Icon>
    <Label ml={4} w={152} size={12.500} weight={700}>Accessibility: Investigate</Label>
    <Icon w={17} h={17} ml={1315} stroke="#c2c2c2" strokeWidth="1.400"><path d="M.7.7h15.600v15.600H.7zM.7 6h15.600M.7 11h15.600M6 .7v15.600M11 .7v15.600" /></Icon>
    <Icon w={18} h={17} ml={33} stroke="#c2c2c2" strokeWidth="1.400"><path d="M.7.7h16.600v15.600H.7zM4 3.500h10v10H4zM6 6h6M6 8.500h6M6 11h6" /></Icon>
    <Icon w={18} h={17} ml={32} stroke="#c2c2c2" strokeWidth="1.400"><path d="M.7.7h16.600v15.600H.7zM.7 9.500h10.500V.7M6 .7v8.800" /></Icon>
    <Icon w={157} h={12} ml={23} stroke="#c0c0c0" strokeWidth="1.200">
      <path d="M0 5.500h9M147 5.500h9M151.500 1v9" />
      <path d="M16 6.500h125M78.500 3v7" stroke="#555" />
    </Icon>
    <Label ml={17} w={31} size={12.500} color="#bdbdbd">100%</Label>
  </StatusBar>
);

/* ---------- taskbar ---------- */

const TaskbarRow = styled.div`
  height: 60px;
  flex: none;
  background: #1f2322;
  border-top: 1px solid #454846;
  color: #fff;
  display: flex;
  align-items: center;
  padding: 0 0 1px 24px;
`;
const Stack = styled.div`
  ${offset}
  display: flex;
  flex-direction: column;
  align-items: ${(p) => p.$align || "flex-start"};
`;
const SearchPill = styled.div`
  ${offset}
  width: 273px;
  height: 38px;
  border-radius: 19px;
  background: #f3f3f3;
  overflow: hidden;
  display: flex;
  align-items: center;
  padding-left: 14px;
`;
const AppTile = styled.div`
  ${offset}
  width: 50px;
  height: 50px;
  border-radius: 6px;
  border: 1px solid #383b3a;
  background: #2b2f2e;
  display: flex;
  flex-direction: column;
  align-items: center;
  padding-top: 10px;
`;
const RunMark = styled.i`
  width: ${(p) => px(p.$w)};
  height: 4px;
  border-radius: 2px;
  margin-top: 6px;
  background: ${(p) => p.$c};
`;
const ChromeSlot = styled.div`
  ${offset}
  padding-top: 10px;
  display: flex;
  flex-direction: column;
  align-items: center;
`;

const Gradients = () => (
  <defs>
    <linearGradient id="win" x1="0" y1="0" x2="1" y2="1"><stop offset="0" stopColor="#8ae0fb" /><stop offset="1" stopColor="#0a95f5" /></linearGradient>
    <linearGradient id="cloud" x1="0" y1="0" x2="0" y2="1"><stop offset="0" stopColor="#8cb4f0" /><stop offset="1" stopColor="#d5e5fb" /></linearGradient>
    <linearGradient id="dia"><stop offset="0" stopColor="#f64fd0" /><stop offset=".45" stopColor="#fb0014" /><stop offset=".6" stopColor="#fb1a00" /><stop offset="1" stopColor="#fba900" /></linearGradient>
    <linearGradient id="edgeTop"><stop offset="0" stopColor="#2b9fe8" /><stop offset=".5" stopColor="#2cc3d5" /><stop offset="1" stopColor="#67e04c" /></linearGradient>
    <linearGradient id="folder" x1="0" y1="0" x2="1" y2="1"><stop offset="0" stopColor="#ffdc66" /><stop offset="1" stopColor="#fbb615" /></linearGradient>
    <linearGradient id="cp1" x1="0" y1="0" x2="0" y2="1"><stop offset="0" stopColor="#1f9cf0" /><stop offset=".5" stopColor="#3fbf8a" /><stop offset="1" stopColor="#f4d12c" /></linearGradient>
    <linearGradient id="cp2" x1="1" y1="0" x2="0" y2="1"><stop offset="0" stopColor="#8b52f4" /><stop offset="1" stopColor="#fb5f8d" /></linearGradient>
    <radialGradient id="glow"><stop offset="0" stopColor="#fbdcda" /><stop offset="1" stopColor="#fbdcda" stopOpacity="0" /></radialGradient>
    <linearGradient id="sand"><stop offset="0" stopColor="#4e3226" /><stop offset=".5" stopColor="#b37749" /><stop offset="1" stopColor="#efb377" /></linearGradient>
  </defs>
);

const Taskbar = () => (
  <TaskbarRow>
    <Icon w={36} h={40}>
      <Gradients />
      <path d="M13 10c1 8-3 14-12 13 1 4 4 6 9 6l10-8c-4-3-6-6-7-11z" fill="#f2a01e" />
      <path d="M7 37.500a6.500 6.500 0 0 1 0-12.500c1-10 15-10 17-2 8 0 9 14 0 14.500z" fill="url(#cloud)" />
      <circle cx="25" cy="11.500" r="10" fill="#c42b1c" />
      <text x="25" y="16" fill="#fff" fontSize="13" textAnchor="middle">1</text>
    </Icon>
    <Stack $ml={4}>
      <Label w={30} size={14.500}>13°C</Label>
      <Label w={94} size={15} color="#cfcfcf">Mostly cloudy</Label>
    </Stack>
    <Icon w={29} h={29} ml={372}>
      <path d="M0 1.500Q0 0 1.500 0H14v14H0zM15 0h12.500Q29 0 29 1.500V14H15zM0 15h14v14H1.500Q0 29 0 27.500zM15 15h14v12.500q0 1.500-1.500 1.500H15z" fill="url(#win)" />
    </Icon>
    <SearchPill $ml={18}>
      <Icon w={18} h={18} stroke="#222" strokeWidth="2"><circle cx="7.800" cy="7.800" r="6.800" /><path d="M12.500 12.500l5 5" strokeWidth="2.400" /></Icon>
      <Label ml={13} w={51} size={16.500} color="#616161">Search</Label>
      <Icon w={60} h={38} ml={110}>
        <ellipse cx="30" cy="18" rx="38" ry="17" fill="url(#glow)" />
        <circle cx="24" cy="13.500" r="4.600" fill="#fba3a3" />
        <circle cx="37.500" cy="22.500" r="3.600" fill="#fbc283" />
        <path d="M6 34c6-1 10-2 17-2 2-6 14-7 17 0 7 0 12 1 15 2l-4 1c-10 1.500-30 1.500-41 0z" fill="url(#sand)" />
        <path d="M23 32c2-7 13-7 17 0-3 4-13 4-17 0z" fill="#cf955a" />
      </Icon>
    </SearchPill>
    <Icon w={30} h={28} ml={16}>
      <rect x="7.500" y="0" width="22.500" height="20.500" rx="1.500" fill="#ececec" />
      <rect x="0" y="8" width="22.500" height="20" rx="1.500" fill="#6a6a6a" />
      <path d="M7.500 8h15v12.500h-15z" fill="#b4b4b4" />
    </Icon>
    <Icon w={26} h={23} ml={27}>
      <circle cx="14.500" cy="3.500" r="4" fill="#7b83eb" />
      <circle cx="22.500" cy="5" r="2.700" fill="#5059c9" />
      <path d="M18 9h8v7c0 3-3 5-6 4z" fill="#5059c9" />
      <path d="M9 9h12v8c0 7-10 8-12 2z" fill="#7b83eb" />
      <rect x="0" y="5" width="14" height="14" fill="#fff" />
      <path d="M3.500 8.500h7M7 8.500v8" stroke="#4b53bc" strokeWidth="2" />
    </Icon>
    <Icon w={30} h={27} ml={27}>
      <path d="M0 2Q0 0 2 0h8l3 3.500h15v8H0z" fill="#e5a00d" />
      <path d="M0 6h12l3-2.500h13.500Q30 3.500 30 5v20.500q0 1.500-1.500 1.500h-27Q0 27 0 25.500z" fill="url(#folder)" />
      <path d="M5 27v-4q0-3.500 3.500-3.500h13q3.500 0 3.500 3.500v4z" fill="#0f73cd" />
      <path d="M8.500 23.500h13" stroke="#0a4f9c" strokeWidth="1.200" />
    </Icon>
    <Icon w={30} h={30} ml={25}>
      <circle cx="15" cy="15" r="15" fill="#0c7bd8" />
      <path d="M0 14C1 5 8 0 15 0c9 0 15 6.500 15 13 0 5-4 7.500-8 7.500-3 0-5-1.500-4-3C20.500 13 17 7 10 7 5 7 1 10 0 14z" fill="url(#edgeTop)" />
      <path d="M17 11.500c-5-1-8 3-7.500 7.500.5 6 6 9.500 10 9.500 4-1 7-4 8.500-7-4 2-13 2-13-4.500 0-2.500 1-4 2-5.500z" fill="#134f9c" />
      <path d="M17 12.500c-4 .5-3.500 10 6 10.500 2 0 4-.5 5.500-1.500L31 20v-4c-1 3-5 4.500-9 4.500-3 0-5-1.500-4-3 .8-1.500.5-4-1-5z" fill="#1f2322" />
    </Icon>
    <Icon w={29} h={29} ml={25}>
      <path d="M0 5h29v21q0 3-3 3H3q-3 0-3-3z" fill="#f3f3f3" />
      <path d="M8 6V1h13v5" stroke="#2ab0ee" strokeWidth="2" />
      <path d="M9 11h5v5H9z" fill="#f25022" /><path d="M15 11h5v5h-5z" fill="#7fba00" />
      <path d="M9 17h5v5H9z" fill="#00a4ef" /><path d="M15 17h5v5h-5z" fill="#ffb900" />
    </Icon>
    <Icon w={30} h={29} ml={26}><path d="M15 0l15 14.500L15 29 0 14.500z" fill="url(#dia)" /></Icon>
    <Icon w={30} h={30} ml={25}>
      <circle cx="15" cy="15" r="14" fill="#0f9ad7" stroke="#fff" strokeWidth="2" />
      <path d="M9.500 10.500c1-6 11-5.500 10.500 0 0 4-5 4-5 9" stroke="#fff" strokeWidth="3.600" />
      <circle cx="15" cy="24" r="2.400" fill="#fff" />
      <circle cx="26" cy="4" r="10" fill="#ffc20e" />
    </Icon>
    <Icon w={27} h={30} ml={26}>
      <path d="M0 0l13.500 6L27 0v23.500L13.500 30 0 23.500zM6 9v11l7.500 4 7.500-4V9l-7.500 3.500z" fill="#c02b2b" fillRule="evenodd" />
    </Icon>
    <ChromeSlot $ml={27}>
      <Icon w={30} h={30}>
        <path d="M15 15L2 7.500A15 15 0 0 1 28 7.500z" fill="#e33b2e" />
        <path d="M15 15l-13-7.500A15 15 0 0 0 15 30l6.500-11z" fill="#2a9d49" />
        <path d="M15 7.500h13A15 15 0 0 1 15 30l6.500-11z" fill="#fcc31c" />
        <circle cx="15" cy="15" r="7.500" fill="#fff" />
        <circle cx="15" cy="15" r="6" fill="#3a7df0" />
      </Icon>
      <RunMark $w={8} $c="#9a9a9a" />
    </ChromeSlot>
    <AppTile $ml={15}>
      <ExcelLogo w={30} h={28} />
      <RunMark $w={20} $c="#4cc2ff" />
    </AppTile>
    <Icon w={14} h={9} ml={105} stroke="#fff" strokeWidth="1.800"><path d="M1 8l6-6.500L13 8" /></Icon>
    <Icon w={20} h={13} ml={23}>
      <path d="M1 9c0-4 3-5 5-4.500C7-1 14-1 15.500 4c2 0 4 2 4.500 4L10 12z" fill="#9b9b9b" />
      <path d="M3 13c-3-1-4-6 1-7 4-1 5 2 7 3 4-2 9-1 9 2 0 1-1 2-2 2z" fill="#f5f5f5" />
    </Icon>
    <Stack $ml={23} $align="center">
      <Label w={29} size={14.500}>ENG</Label>
      <Label w={18} size={14.500}>US</Label>
    </Stack>
    <Icon w={20} h={16} ml={23} stroke="#fff" strokeWidth="1.600">
      <path d="M.8 6.500C6-.5 14-.5 19.200 6.500M3.500 9.500c4-5 9-5 13 0M6.500 12.200c2-2.500 5-2.500 7 0" />
      <circle cx="10" cy="14" r="1.800" fill="#fff" stroke="none" />
    </Icon>
    <Icon w={20} h={18} ml={10} stroke="#fff" strokeWidth="1.500">
      <path d="M.8 6.500h3.700L9 2v14l-4.500-4H.8zM11.500 6q2 3 0 6M14 3.500q4 5.500 0 11M16.500 1q6 8 0 16" />
    </Icon>
    <Icon w={20} h={13} ml={10} stroke="#fff" strokeWidth="1.500">
      <rect x=".8" y=".8" width="16" height="11.400" rx="2.500" />
      <path d="M3 3h4.500v7H3z" fill="#fff" stroke="none" /><path d="M18.800 4v5" strokeWidth="2" />
    </Icon>
    <Stack $ml={20} $align="flex-end">
      <Label w={63} size={14.500}>12:13 AM</Label>
      <Label w={78} size={14.500}>2024-05-05</Label>
    </Stack>
    <Icon w={17} h={18} ml={10} stroke="#fff" strokeWidth="1.400">
      <path d="M.8 14.500h15.400L14.500 11V7a6 6 0 0 0-12 0v4zM6 15c.5 3 4.500 3 5 0" />
    </Icon>
    <Icon w={30} h={30} ml={22}>
      <path d="M4.500 4Q6 1 9.500 1H20q-4 1-5.500 6L11 20H3q-4-1-2.700-6z" fill="url(#cp1)" />
      <path d="M14 1h3.500q3.500 0 4.500 4l1 3h-5.500L15 6z" fill="#1748d6" />
      <path d="M19 8h6.500q3.500 1 2.700 5L26 22H13z" fill="url(#cp2)" />
      <path d="M17.500 8h-2L11.500 21h2z" fill="#1f2322" />
      <rect x="7" y="20" width="23" height="10" rx="2" fill="#ffc619" />
      <text x="18.500" y="28.300" fill="#222" fontSize="9" fontWeight="800" textAnchor="middle">PRE</text>
    </Icon>
  </TaskbarRow>
);

export default function App() {
  return (
    <Screen>
      <GlobalStyle />
      <TopBar />
      <Tabs />
      <Ribbon />
      <FormulaBar />
      <Worksheet />
      <SheetTabs />
      <Status />
      <Taskbar />
    </Screen>
  );
}
